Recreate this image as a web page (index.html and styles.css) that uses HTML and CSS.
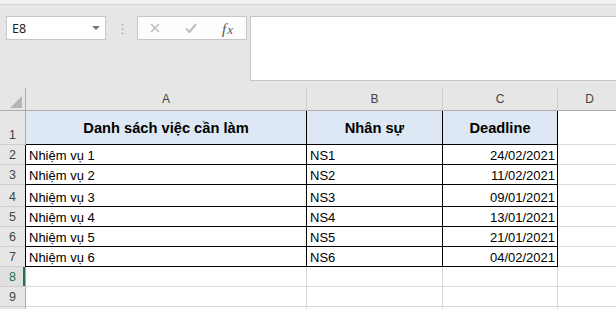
FILE: index.html
```html
<!DOCTYPE html>
<html lang="vi">
<head>
    <meta charset="UTF-8">
    <title>Danh sách việc cần làm</title>
    <link rel="stylesheet" href="styles.css">
</head>
<body>
    <div class="titlebar"></div>
    <div class="toolbar">
        <div class="namebox"><span>E8</span><span class="caret"></span></div>
        <svg class="grip" width="3" height="12" viewBox="0 0 3 12">
            <circle cx="1.5" cy="1.5" r="1" fill="#b0b0b0"/>
            <circle cx="1.5" cy="6" r="1" fill="#b0b0b0"/>
            <circle cx="1.5" cy="10.5" r="1" fill="#b0b0b0"/>
        </svg>
        <div class="fxbuttons">
            <svg width="10" height="10" viewBox="0 0 10 10">
                <path d="M1 1 L9 9 M9 1 L1 9" stroke="#bdbdbd" stroke-width="1.6" fill="none"/>
            </svg>
            <svg width="12" height="10" viewBox="0 0 12 10">
                <path d="M1 5.5 L4.5 9 L11 1" stroke="#bdbdbd" stroke-width="2" fill="none"/>
            </svg>
            <span class="fx"><i>f</i><i class="x">x</i></span>
        </div>
        <div class="formula"></div>
    </div>

    <div class="sheet">
        <div class="corner"><span class="corner-tri"></span></div>
        <div class="colhead">A</div>
        <div class="colhead">B</div>
        <div class="colhead">C</div>
        <div class="colhead">D</div>

        <div class="rowhead">1</div>
        <div class="cell t head">Danh sách việc cần làm</div>
        <div class="cell t head">Nhân sự</div>
        <div class="cell t head">Deadline</div>
        <div class="cell"></div>

        <div class="rowhead">2</div>
        <div class="cell t first">Nhiệm vụ 1</div>
        <div class="cell t">NS1</div>
        <div class="cell t date">24/02/2021</div>
        <div class="cell"></div>

        <div class="rowhead">3</div>
        <div class="cell t first">Nhiệm vụ 2</div>
        <div class="cell t">NS2</div>
        <div class="cell t date">11/02/2021</div>
        <div class="cell"></div>

        <div class="rowhead">4</div>
        <div class="cell t first">Nhiệm vụ 3</div>
        <div class="cell t">NS3</div>
        <div class="cell t date">09/01/2021</div>
        <div class="cell"></div>

        <div class="rowhead">5</div>
        <div class="cell t first">Nhiệm vụ 4</div>
        <div class="cell t">NS4</div>
        <div class="cell t date">13/01/2021</div>
        <div class="cell"></div>

        <div class="rowhead">6</div>
        <div class="cell t first">Nhiệm vụ 5</div>
        <div class="cell t">NS5</div>
        <div class="cell t date">21/01/2021</div>
        <div class="cell"></div>

        <div class="rowhead">7</div>
        <div class="cell t first">Nhiệm vụ 6</div>
        <div class="cell t">NS6</div>
        <div class="cell t date">04/02/2021</div>
        <div class="cell"></div>

        <div class="rowhead active">8</div>
        <div class="cell"></div>
        <div class="cell"></div>
        <div class="cell"></div>
        <div class="cell"></div>

        <div class="rowhead">9</div>
        <div class="cell"></div>
        <div class="cell"></div>
        <div class="cell"></div>
        <div class="cell"></div>

        <!-- top sliver of row 10 -->
        <div class="rowhead"></div>
        <div class="cell"></div>
        <div class="cell"></div>
        <div class="cell"></div>
        <div class="cell"></div>
    </div>
</body>
</html>
```

FILE: styles.css
```css
/* Excel-like sheet, light theme */
* {
    box-sizing: border-box;
}

body {
    margin: 0;
    width: 616px;
    height: 309px;
    overflow: hidden;
    background-color: #e6e6e6;
    font-family: "Liberation Sans", Arial, sans-serif;
}

.titlebar {
    height: 5px;
    background-color: #f1f1f1;
    border-bottom: 1px solid #d4d4d4;
}

/* name box + formula bar */
.toolbar {
    height: 83px;
    display: flex;
    align-items: flex-start;
    padding: 11px 0 0 6px;
}

.namebox {
    width: 100px;
    height: 24px;
    display: flex;
    align-items: center;
    justify-content: space-between;
    padding: 0 5px 0 5px;
    background-color: #ffffff;
    border: 1px solid #c6c6c6;
    font-family: "Noto Sans", "Liberation Sans", sans-serif;
    font-size: 12.5px;
    color: #222222;
}

.caret {
    width: 0;
    height: 0;
    border-left: 4px solid transparent;
    border-right: 4px solid transparent;
    border-top: 4px solid #777777;
}

.grip {
    margin: 7px 0 0 15px;
}

.fxbuttons {
    width: 110px;
    height: 24px;
    margin-left: 13px;
    display: flex;
    align-items: center;
    gap: 25px;
    padding-left: 12px;
    background-color: #fdfdfd;
    border: 1px solid #c6c6c6;
}

.fx {
    font-family: "Liberation Serif", serif;
    font-size: 15px;
    color: #555555;
    margin-top: 2px;
}

.fx .x {
    font-size: 13px;
    margin-left: 1px;
}

.formula {
    flex: 1;
    height: 65px;
    margin-left: 3px;
    background-color: #ffffff;
    border: 1px solid #c6c6c6;
    border-right: none;
}

/* the grid */
.sheet {
    display: grid;
    grid-template-columns: 26px 281px 136px 115px 64px;
    grid-template-rows: 23px 34px 20px 20px 22px 20px 20px 20px 20px 20px 3px;
    background-color: #ffffff;
    overflow: hidden;
}

.corner {
    display: flex;
    align-items: flex-end;
    justify-content: flex-end;
    padding: 0 3px 2px 0;
    background-color: #e6e6e6;
    border-right: 1px solid #ababab;
    border-bottom: 1px solid #ababab;
}

.corner-tri {
    width: 0;
    height: 0;
    border-left: 12px solid transparent;
    border-bottom: 12px solid #b5b5b5;
}

.colhead {
    display: flex;
    align-items: center;
    justify-content: center;
    background-color: #e6e6e6;
    border-right: 1px solid #cdcdcd;
    border-bottom: 1px solid #ababab;
    font-size: 12px;
    color: #444444;
}

.rowhead {
    display: flex;
    align-items: flex-end;
    justify-content: center;
    padding-bottom: 2px;
    background-color: #e6e6e6;
    border-right: 1px solid #ababab;
    border-bottom: 1px solid #cdcdcd;
    font-size: 12.5px;
    color: #444444;
}

.rowhead.active {
    color: #217346;
    background-color: #e0e0e0;
    box-shadow: inset -2px 0 0 #217346;
}

.cell {
    display: flex;
    align-items: flex-end;
    padding: 0 3px;
    border-right: 1px solid #d9d9d9;
    border-bottom: 1px solid #d9d9d9;
    font-size: 13px;
    line-height: 16px;
    color: #000000;
    white-space: nowrap;
    overflow: hidden;
}

.cell.t {
    border-color: #000000;
}

.cell.first {
    box-shadow: -1px 0 0 #000000;
}

.cell.head {
    align-items: center;
    justify-content: center;
    background-color: #dde8f4;
    font-weight: bold;
    font-size: 14.667px;
}

.cell.date {
    justify-content: flex-end;
    padding-right: 2px;
}
```
